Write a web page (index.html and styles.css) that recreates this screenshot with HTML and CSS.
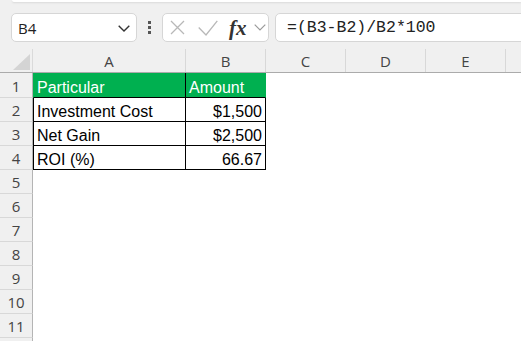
FILE: index.html
```html
<!DOCTYPE html>
<html>
<head>
<meta charset="utf-8">
<link rel="stylesheet" href="styles.css">
</head>
<body>
<div class="app">
  <div class="ribbon-edge"></div>
  <div class="fbar">
    <div class="namebox">
      <span class="ref">B4</span>
      <svg class="chev" width="12" height="7" viewBox="0 0 12 7"><polyline points="0.7,0.7 6,6 11.3,0.7" fill="none" stroke="#333" stroke-width="1.4"/></svg>
    </div>
    <div class="dots"><i></i><i></i><i></i></div>
    <div class="fnbox">
      <svg class="ico-x" width="15" height="15" viewBox="0 0 15 15"><path d="M1 1L14 14M14 1L1 14" stroke="#b8b8b8" stroke-width="1.3" fill="none"/></svg>
      <svg class="ico-check" width="20" height="16" viewBox="0 0 20 16"><polyline points="0.7,7.5 8,15 19.3,0.8" fill="none" stroke="#b8b8b8" stroke-width="1.3"/></svg>
      <span class="fx">fx</span>
      <svg class="chev-sm" width="12" height="7" viewBox="0 0 12 7"><polyline points="0.7,0.7 6,6 11.3,0.7" fill="none" stroke="#9a9a9a" stroke-width="1.2"/></svg>
    </div>
    <div class="formula">=(B3-B2)/B2*100</div>
  </div>
  <div class="sheet">
    <div class="row colhdr">
      <div class="corner"><svg width="17" height="16" viewBox="0 0 17 16"><polygon points="17,0 17,16 0,16" fill="#d4d4d4"/></svg></div>
      <div class="ch">A</div><div class="ch">B</div><div class="ch">C</div><div class="ch">D</div><div class="ch">E</div><div class="ch last"></div>
    </div>
    <div class="row r1">
      <div class="rh">1</div>
      <div class="c a hd">Particular</div>
      <div class="c b hd">Amount</div>
    </div>
    <div class="row">
      <div class="rh">2</div>
      <div class="c a">Investment Cost</div>
      <div class="c b num">$1,500</div>
    </div>
    <div class="row">
      <div class="rh">3</div>
      <div class="c a">Net Gain</div>
      <div class="c b num">$2,500</div>
    </div>
    <div class="row">
      <div class="rh">4</div>
      <div class="c a">ROI (%)</div>
      <div class="c b num">66.67</div>
    </div>
    <div class="row"><div class="rh">5</div></div>
    <div class="row"><div class="rh">6</div></div>
    <div class="row"><div class="rh">7</div></div>
    <div class="row"><div class="rh">8</div></div>
    <div class="row"><div class="rh">9</div></div>
    <div class="row"><div class="rh">10</div></div>
    <div class="row"><div class="rh">11</div></div>
    <div class="row"><div class="rh"></div></div>
  </div>
</div>
</body>
</html>
```
FILE: styles.css
```css
html, body {
  margin: 0;
  padding: 0;
}
body {
  width: 521px;
  height: 341px;
  overflow: hidden;
  background: #f0f0f0;
}
.app {
  width: 521px;
  height: 341px;
  overflow: hidden;
}
.ribbon-edge {
  height: 2px;
  margin-left: 12px;
  background: #fff;
  border-bottom-left-radius: 4px;
  box-shadow: 0 1px 2px rgba(0,0,0,0.10);
}
.fbar {
  display: flex;
  align-items: center;
  margin-top: 11px;
  height: 29px;
}
.namebox, .fnbox, .formula {
  box-sizing: border-box;
  height: 29px;
  background: #fff;
  border: 1px solid #d6d6d6;
  border-radius: 5px;
  display: flex;
  align-items: center;
}
.namebox {
  margin-left: 11px;
  width: 126px;
  justify-content: space-between;
  padding: 0 6px 0 6px;
}
.ref {
  font-family: "Open Sans", "Noto Sans", sans-serif;
  font-size: 15px;
  color: #222;
  line-height: 20px;
}
.chev {
  margin-top: 2px;
}
.dots {
  width: 25px;
  display: flex;
  flex-direction: column;
  align-items: center;
  gap: 2px;
}
.dots i {
  display: block;
  width: 3px;
  height: 3px;
  background: #555;
}
.fnbox {
  width: 107px;
  padding-left: 7px;
}
.ico-check {
  margin-left: 13px;
}
.fx {
  display: inline-block;
  width: 19px;
  margin-left: 11px;
  font-family: "Liberation Serif", serif;
  font-style: italic;
  font-weight: bold;
  font-size: 21px;
  line-height: 24px;
  color: #333;
}
.chev-sm {
  margin-left: 6px;
}
.formula {
  flex: 1;
  margin-left: 6px;
  margin-right: -12px;
  padding-left: 11px;
  font-family: "Liberation Mono", "DejaVu Sans Mono", monospace;
  font-size: 16.5px;
  color: #222;
}
.sheet {
  margin-top: 7px;
  background: #fff;
}
.row {
  display: grid;
  grid-template-columns: 33px 153px 80px 80px 80px 80px 1fr;
  height: 24px;
  box-sizing: border-box;
}
.row.r1 {
  height: 25px;
}
.colhdr {
  background: #f0f0f0;
  border-bottom: 1px solid #ababab;
}
.corner {
  box-sizing: border-box;
  border-right: 1px solid #dadada;
  display: flex;
  align-items: flex-end;
  justify-content: flex-end;
  padding: 0 2px 2px 0;
}
.ch {
  box-sizing: border-box;
  border-right: 1px solid #d8d8d8;
  display: flex;
  align-items: center;
  justify-content: center;
  padding-top: 1px;
  font-family: "Open Sans", "Noto Sans", sans-serif;
  font-size: 15px;
  line-height: 20px;
  color: #444;
}
.ch.last {
  border-right: none;
}
.rh {
  box-sizing: border-box;
  background: #f0f0f0;
  border-right: 1px solid #b4b4b4;
  border-bottom: 1px solid #d8d8d8;
  display: flex;
  align-items: center;
  justify-content: center;
  font-family: "Open Sans", "Noto Sans", sans-serif;
  font-size: 15px;
  line-height: 20px;
  color: #444;
}
.r1 .rh {
  padding-top: 1px;
}
.c {
  box-sizing: border-box;
  display: flex;
  align-items: flex-end;
  padding: 0 3px;
  font-family: "Liberation Sans", Arial, sans-serif;
  font-size: 16px;
  line-height: 18px;
  color: #000;
  border-bottom: 1px solid #000;
  border-right: 1px solid #000;
  white-space: nowrap;
}
.c.a {
  border-left: 1px solid #000;
}
.c.hd {
  background: #00b050;
  color: #fff;
}
.c.a.hd {
  border-left-color: #00b050;
}
.c.b.hd {
  border-right-color: #00b050;
}
.c.num {
  justify-content: flex-end;
}
```
